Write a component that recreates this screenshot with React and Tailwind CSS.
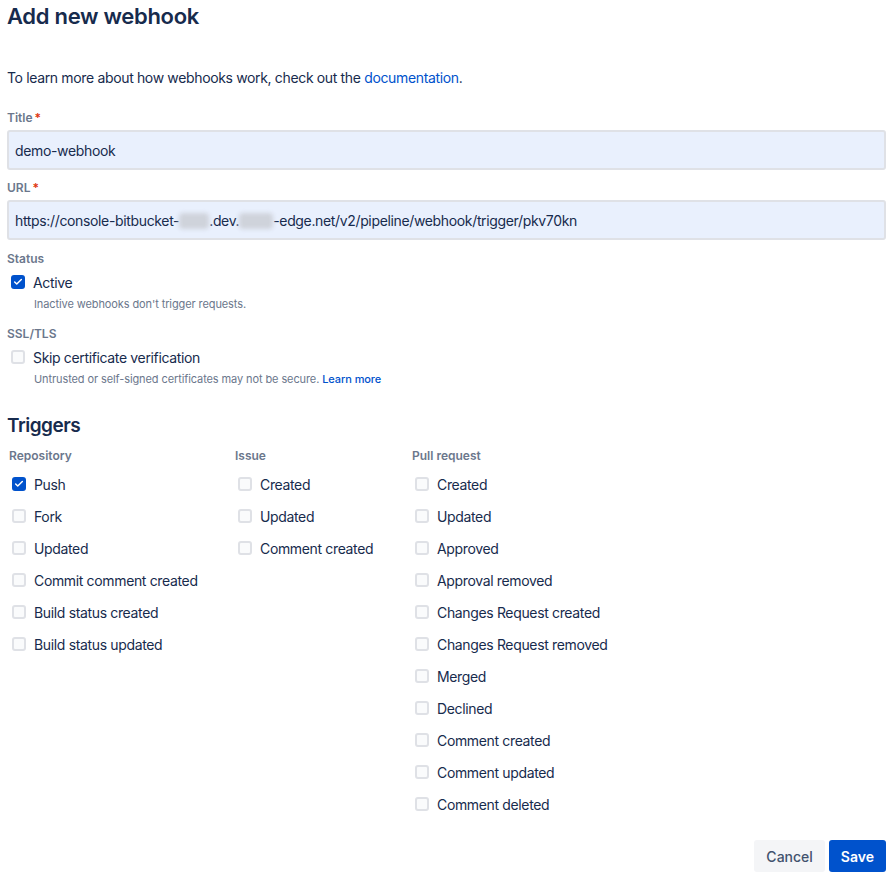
import { Check } from 'lucide-react'

const repository = [
  { label: 'Push', checked: true },
  { label: 'Fork' },
  { label: 'Updated' },
  { label: 'Commit comment created' },
  { label: 'Build status created' },
  { label: 'Build status updated' },
]

const issue = [{ label: 'Created' }, { label: 'Updated' }, { label: 'Comment created' }]

const pullRequest = [
  { label: 'Created' },
  { label: 'Updated' },
  { label: 'Approved' },
  { label: 'Approval removed' },
  { label: 'Changes Request created' },
  { label: 'Changes Request removed' },
  { label: 'Merged' },
  { label: 'Declined' },
  { label: 'Comment created' },
  { label: 'Comment updated' },
  { label: 'Comment deleted' },
]

// Atlaskit-ish checkbox box
function Box({ checked }) {
  return checked ? (
    <span className="flex size-[14px] shrink-0 items-center justify-center rounded-[3px] bg-[#0052CC]">
      <Check size={10} strokeWidth={3.5} className="text-white" />
    </span>
  ) : (
    <span className="size-[14px] shrink-0 rounded-[3px] border-2 border-[#DFE1E6] bg-[#FAFBFC]" />
  )
}

function CheckRow({ label, checked }) {
  return (
    <label className="flex h-8 items-center gap-[8px] pl-[4px] text-[14px] tracking-[-0.35px] text-[#172B4D]">
      <Box checked={checked} />
      <span>{label}</span>
    </label>
  )
}

function Column({ title, items, width }) {
  return (
    <div className={width}>
      <h3 className="mb-[4px] pl-[1px] text-[12px] font-semibold leading-4 text-[#6B778C]">{title}</h3>
      {items.map((it) => (
        <CheckRow key={it.label} {...it} />
      ))}
    </div>
  )
}

function FieldLabel({ children }) {
  return (
    <div className="mb-[4px] flex h-4 items-center text-[12px] font-semibold text-[#6B778C]">
      {children}
      <span className="ml-[2px] text-[#DE350B]">*</span>
    </div>
  )
}

function Blur({ w }) {
  return <span className={`inline-block h-[16px] ${w} translate-y-[3px] rounded-sm bg-[#cfd3db] blur-[2px]`} />
}

export default function App() {
  return (
    <div className="min-h-[876px] w-full bg-white pl-[7px] pr-[3px] font-['Inter',sans-serif] text-[#172B4D]">
      <h1 className="h-8 text-[22px] font-semibold leading-8 tracking-[-0.3px]">Add new webhook</h1>

      <p className="mt-[36px] text-[14px] leading-5 tracking-[-0.35px]">
        To learn more about how webhooks work, check out the{' '}
        <a className="text-[#0052CC]">documentation</a>.
      </p>

      {/* Title */}
      <div className="mt-[22px]">
        <FieldLabel>Title</FieldLabel>
        <div className="flex h-[40px] items-center rounded-[3px] border-2 border-[#DFE1E6] bg-[#E9F0FD] px-[6px] text-[14px] tracking-[-0.35px]">
          demo-webhook
        </div>
      </div>

      {/* URL */}
      <div className="mt-[10px]">
        <FieldLabel>URL</FieldLabel>
        <div className="flex h-[40px] items-center whitespace-pre rounded-[3px] border-2 border-[#DFE1E6] bg-[#E9F0FD] px-[6px] text-[14px] tracking-[-0.35px]">
          <span>
            https://console-bitbucket-<Blur w="w-[30px]" />.dev.<Blur w="w-[34px]" />-edge.net/v2/pipeline/webhook/trigger/pkv70kn
          </span>
        </div>
      </div>

      {/* Status */}
      <div className="mt-[11px]">
        <h3 className="h-4 text-[12px] font-semibold leading-4 text-[#6B778C]">Status</h3>
        <div className="-mt-[1px]">
          <CheckRow label="Active" checked />
        </div>
        <p className="-mt-[2px] pl-[27px] text-[11px] leading-4 tracking-[-0.1px] text-[#6B778C]">
          Inactive webhooks don't trigger requests.
        </p>
      </div>

      <div className="mt-[14px]">
        <h3 className="h-4 text-[12px] font-semibold leading-4 text-[#6B778C]">SSL/TLS</h3>
        <div className="-mt-[1px]">
          <CheckRow label="Skip certificate verification" />
        </div>
        <p className="-mt-[2px] pl-[27px] text-[11px] leading-4 tracking-[-0.1px] text-[#6B778C]">
          Untrusted or self-signed certificates may not be secure.{' '}
          <a className="font-medium text-[#0052CC]">Learn more</a>
        </p>
      </div>

      {/* Triggers */}
      <h2 className="mt-[27px] text-[19px] font-semibold leading-6 tracking-[-0.5px]">Triggers</h2>
      <div className="mt-[10px] flex pl-[1px]">
        <Column title="Repository" items={repository} width="w-[226px]" />
        <Column title="Issue" items={issue} width="w-[177px]" />
        <Column title="Pull request" items={pullRequest} width="flex-1" />
      </div>

      <div className="mt-[20px] flex justify-end gap-1">
        <button className="h-8 rounded-[3px] bg-[#F4F5F7] px-3 text-[14px] font-medium text-[#42526E]">
          Cancel
        </button>
        <button className="h-8 rounded-[3px] bg-[#0052CC] px-3 text-[14px] font-semibold text-white">Save</button>
      </div>
    </div>
  )
}
